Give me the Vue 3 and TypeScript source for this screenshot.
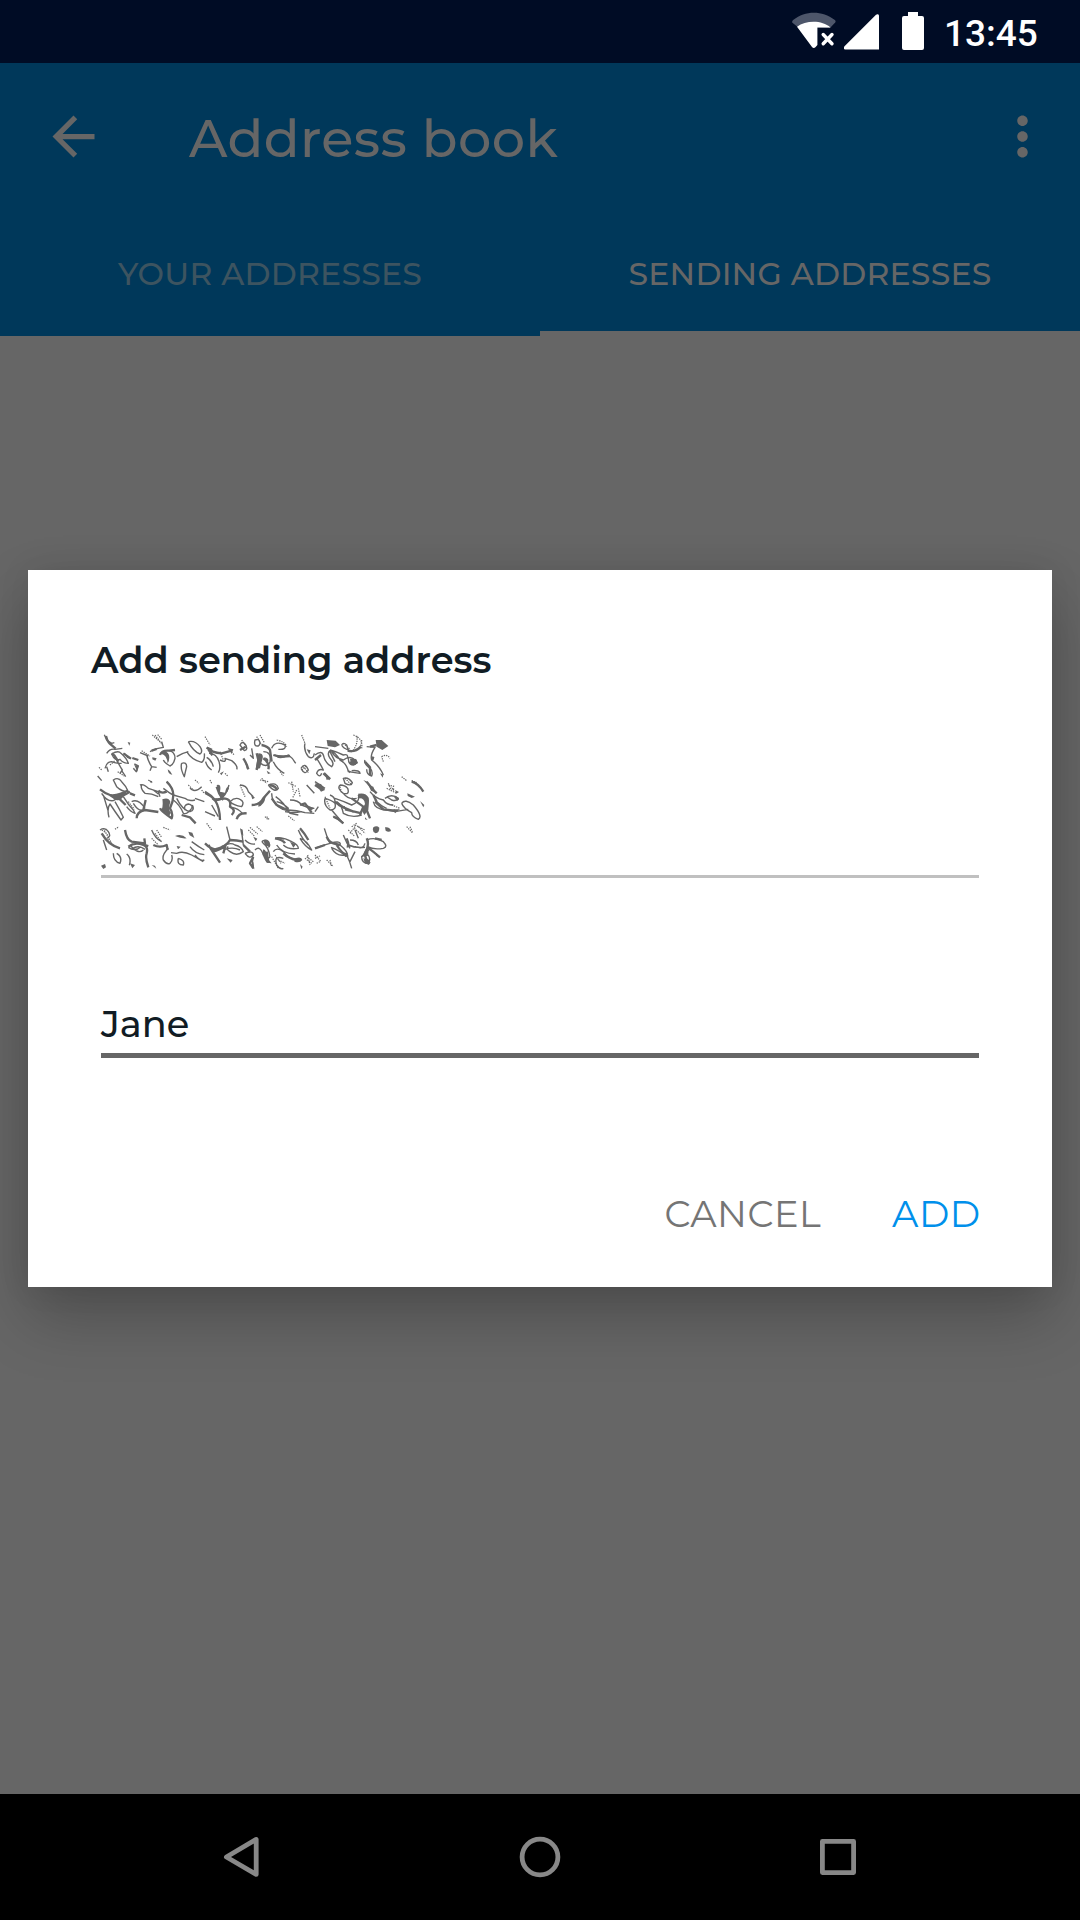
<script setup lang="ts">
import { ref } from 'vue'

interface Tab {
  id: string
  label: string
}

interface Scribble {
  offset: number
  hair: string
  dotted: string
  bold: string
  blobs: string
}

const tabs: Tab[] = [
  { id: 'own', label: 'YOUR ADDRESSES' },
  { id: 'sending', label: 'SENDING ADDRESSES' },
]
const activeTab = ref('sending')
const label = ref('Jane')

// The obscured address, drawn as three neighbouring patches of strokes.
const scribbles: Scribble[] = [
  {
    offset: 0,
    hair: `M28 14L35 30L50 40L58 38M50 72Q70 60 78 70Q95 85 100 100Q85 100 75 88Q60 95 50 72M35 70Q45 55 60 58L82 55M30 115Q35 95 50 95Q60 100 80 100M35 110L40 125M60 80Q75 110 82 120L75 130M80 122L92 140M135 68L160 78M118 102L130 108L124 125L115 115
      M165 65Q180 55 205 52L200 35M155 75Q160 95 170 110L165 122M170 110L185 112M222 62Q240 65 240 85Q235 105 225 108Q210 100 205 90M245 80Q260 70 280 65M260 100Q275 95 275 110Q270 130 268 140Q255 115 260 100M280 35Q300 30 315 50Q325 65 315 72Q295 65 280 35M275 65Q290 90 320 97Q330 90 328 70M88 70L98 82L108 86
      M55 150Q70 140 80 155Q95 170 100 185Q80 185 65 170ZM20 190Q35 215 55 212L85 195M25 195L40 245M60 215Q75 240 85 262L78 270Q60 245 45 222Q35 235 42 262M85 200Q100 225 115 240L120 250Q105 245 95 230M110 215Q130 205 150 235M115 220Q130 245 145 240M140 165Q135 175 150 190Q170 190 190 200M135 165Q145 160 160 175L190 185L195 200M205 175Q225 190 235 195L270 205Q280 215 300 210M235 210Q255 225 265 250Q275 255 290 235Q295 225 280 222Q265 225 270 240M245 205Q262 240 285 245Q300 240 292 225M285 175Q300 190 320 170M300 205L328 215M175 180L190 192M8 138L20 152
      M15 300Q30 290 40 305Q50 320 35 325M25 330L35 360M105 345Q130 375 145 360M65 370q18 10 10 30q-20 -5 -20 -30M95 372q15 12 8 34M220 355Q200 375 205 390Q215 405 225 400Q235 390 230 375M228 368L245 370Q265 362 290 375L325 395M250 385q20 5 15 20q-20 0 -15 -20M290 335Q310 350 328 360M300 375Q315 395 328 390M100 352Q120 366 138 350M112 356Q130 344 150 358M170 300Q180 325 200 335M285 350Q300 372 328 374`,
    dotted: `M172 15L198 38M180 15L203 45M188 14L200 28M140 62L165 78M45 105L60 92M68 125L88 138M12 112L20 120M160 150L172 158M215 155L230 172M20 300Q40 310 42 330M25 295L50 340M60 298L72 290M185 300L200 322M180 310L195 330M205 292L225 300M170 325L190 345M280 165L300 185M300 150L312 160M320 180L328 190M100 215L118 238`,
    bold: `M33 18Q38 38 48 44L62 56M50 70L58 76L70 95M85 70L108 86M112 84L130 90M195 75Q200 60 222 62L240 60M170 62L185 57M15 178Q30 190 45 195L60 205Q80 200 105 185M72 205L92 225M105 190L120 196M125 265Q125 245 150 240L190 246M190 182Q200 192 215 185M215 155Q235 175 235 195Q235 215 225 235Q235 250 230 265Q200 245 195 235M260 255L285 262L302 280M20 310Q40 345 75 355M90 300Q95 330 110 335L150 340L148 325M100 350Q120 335 145 345Q160 350 155 370Q150 385 160 412M175 345Q195 355 215 345L218 360M145 240L152 210M120 336L160 348`,
    blobs: `M118 105L130 108L127 125ZM200 68Q215 58 222 75Q225 90 218 100Q215 75 200 72ZM218 118q10 5 14 16q-12 0 -14 -16M172 82l13 3l-4 7l-9 -4zM98 36l8 2l-3 9zM200 240Q205 225 202 208Q220 200 226 215Q218 240 228 248L222 258ZM45 192Q70 195 98 178Q88 205 72 210Q60 215 45 192M240 318Q260 310 275 325Q260 327 240 318M280 305l12 3l6 16l-14 -8zM18 407l12 -5l3 10l-8 5zM105 400l15 5l-8 10zM170 405l10 2l4 9zM160 150l12 4l-3 6zM245 348l12 2l-8 8z`,
  },
  {
    offset: 330,
    hair: `M12 70Q35 70 42 95Q48 115 40 128M5 82Q20 90 25 110M20 120Q5 110 2 95M45 90Q65 100 60 85L80 92Q100 108 95 118M105 45Q112 30 122 45Q130 60 118 62ZM150 30Q145 50 160 48Q170 40 160 28ZM135 75L145 85L140 55M175 65Q200 65 195 95Q190 110 175 105Q155 95 160 80M210 75Q225 90 250 75Q265 85 272 100M205 95Q215 118 238 130M200 55Q210 30 240 45Q245 60 220 58M300 40Q295 60 310 80Q325 90 328 70M288 115Q300 95 310 120Q300 138 288 115
      M0 190Q20 200 35 212M65 185L72 165M75 215Q90 200 105 208Q120 215 110 230Q85 225 75 215M80 232Q100 235 112 250M105 165Q125 165 130 185L145 200M190 165Q215 155 220 175Q210 190 190 165M200 190Q200 215 220 230Q240 245 250 235Q235 220 215 215M212 200Q235 215 255 250L280 255M255 210Q280 210 290 225Q310 235 328 235M250 240Q275 240 300 248L328 250M240 245Q265 250 290 245M0 245L30 258M305 165L328 190M20 225L40 260
      M65 290Q70 310 75 330M50 350Q75 335 90 345Q110 350 115 365Q95 380 75 365Q60 355 70 350M60 358Q85 350 105 360M120 370Q145 360 145 375Q135 390 120 370M150 360Q165 345 175 375Q190 390 195 380Q190 350 175 340Q165 330 185 332Q200 345 190 352M145 380Q140 395 145 412M110 305L115 345M210 325Q235 320 260 335Q280 345 280 355Q250 360 235 345M215 345Q230 370 270 372M205 365Q215 350 235 365Q250 385 270 388M235 385Q205 375 215 405Q225 420 235 415M280 300Q290 325 310 345M285 325Q305 330 320 360Q300 350 285 325M120 330Q135 345 150 342`,
    dotted: `M0 20L15 45M70 55L88 75M110 30L125 50M155 20L170 45M165 15L178 38M215 30Q240 35 245 50M290 15L300 40M225 125L235 138M295 110L310 128M290 120L305 108M165 150L190 155M170 145L185 160M250 158L275 170M260 155L265 185M275 180L262 205M280 175L285 200M105 165L120 200M15 150L20 160M5 280L20 300M130 300L150 320M135 292L158 312M155 290L172 305M180 260L190 270M250 258L268 272M200 380L220 415M210 375L228 400M220 390L240 400M305 380L325 395M300 385L320 400M308 375L315 405M60 130L70 140M45 65L55 90M185 260L192 268`,
    bold: `M5 52Q20 68 50 70L80 62M10 58L22 76M105 60L122 50M155 70L160 90L155 120M115 85Q125 100 130 118M175 85Q195 98 190 118M170 45Q190 50 195 60L200 95M205 75Q225 82 255 78M0 185Q18 195 30 210L55 205Q80 205 75 230Q95 240 80 255M35 170Q40 190 55 210M30 210Q45 235 45 270M140 225Q165 225 175 205L195 182M195 165Q215 170 215 180M95 268Q100 248 125 250M200 205L215 225L250 242M285 225L300 220L320 248M0 340Q15 355 30 358Q65 350 75 330Q95 330 115 335M10 345L45 398M20 365Q45 360 60 348M115 345L135 365M210 325Q235 330 240 340M235 370Q250 385 275 390M185 365L190 398M145 380L135 400L145 415M285 295Q300 312 310 330M55 370L62 345`,
    blobs: `M8 50L22 56L20 72ZM70 55L85 58L80 72ZM160 70Q178 70 172 88L165 115L152 118ZM178 82Q195 85 188 98ZM118 90L128 105L126 118ZM35 165Q50 160 45 185L60 188Q65 165 72 175Q65 195 48 210ZM20 208Q35 200 50 210L30 215ZM160 220Q175 205 182 200Q178 225 160 230ZM138 195l12 8l-8 5zM305 58l12 3l-4 12zM305 225L328 235L315 243ZM175 330Q190 325 195 340Q192 355 180 345ZM175 358Q185 360 187 385L200 400L185 398Q168 375 175 358M270 385Q290 378 292 390Q285 400 268 395ZM145 395L148 418L138 410ZM145 320l12 6l-5 8zM210 322Q230 318 238 330ZM255 335l18 8l-8 10zM65 385l18 5l-6 8zM285 402l8 8l-4 8zM105 295l8 4l2 18l-7 -5zM185 122l12 8l-8 2zM45 130l12 -6l-8 12z`,
  },
  {
    offset: 660,
    hair: `M0 50L40 55M0 75Q20 60 25 75Q30 100 50 110Q60 100 45 85Q35 70 45 62Q60 65 75 90Q95 100 100 125L135 130Q135 120 110 122M5 85Q15 100 25 120Q10 115 5 130Q15 145 20 130M45 60Q65 65 85 75Q100 70 98 85M50 65Q60 85 85 90Q105 75 120 90Q130 100 115 105Q100 105 100 85M80 45Q85 35 95 45L100 60Q85 55 80 45M155 50L180 52Q165 75 170 90Q195 110 205 135M150 90Q145 100 165 115Q175 125 170 138Q155 135 155 118M60 95L45 65
      M0 155L30 175M85 145Q100 140 112 158Q108 170 90 160ZM75 165Q65 175 85 190Q105 195 98 175Q90 165 75 165M45 195Q60 200 60 215Q75 235 90 230M30 205Q25 225 45 240Q65 240 60 220Q50 210 30 205M60 205Q90 215 110 225Q135 215 130 200M65 215Q80 225 85 250Q110 265 140 255M85 190Q100 210 125 205M165 185Q180 205 205 210Q215 225 235 225M175 215Q180 240 215 240L240 245M180 210Q200 230 215 235M210 205Q230 190 250 205Q245 215 230 210L215 200M240 245L280 238M260 220Q270 205 295 225Q325 260 310 268Q290 260 290 248Q265 235 260 220M10 230L0 245M50 240Q75 270 85 280
      M28 295Q35 320 45 340M0 355Q25 345 45 340Q80 330 75 345Q100 365 98 380Q70 360 48 352M50 355Q65 380 90 375M85 315Q95 340 105 355M105 330Q125 330 130 345M100 345Q120 355 150 352M155 330Q180 320 205 335Q220 350 205 355Q175 360 158 350M165 355Q155 370 140 380Q140 400 160 400Q170 385 155 370M120 350Q145 360 150 340M95 375Q105 395 110 415M120 365L105 395M130 325L120 300`,
    dotted: `M115 15Q145 25 140 55M125 18Q130 40 115 60M140 30Q140 60 105 65M85 40L105 58M200 80Q215 70 225 85M205 95L200 80M90 145L110 165M220 165L240 170M215 175L245 190M220 160L230 185M75 170L80 190M30 200L45 235M110 290L125 280M100 300L120 320M120 285L150 300M118 295L140 315M130 290L150 310M105 310L120 290M275 290L292 308M285 290L292 305M0 375L18 395M0 385L15 378M35 390L55 410M45 390L50 410M5 400L15 395M230 225L255 235M260 140L275 152M290 152L305 158`,
    bold: `M0 90L18 75M25 130L45 148M98 62Q120 68 138 50M105 95Q110 105 125 98L120 88M165 50L185 45M150 95L165 112L165 135M172 90L175 80M155 155L175 180L185 190M130 195Q150 190 158 205L155 240L165 265M110 205L145 230L135 255M60 215L85 232L115 245M55 260Q70 265 85 280M90 238L140 250M175 195L185 215M180 215L205 238L240 242M290 155Q310 160 325 185M240 200L250 210M35 320Q40 335 55 340L75 345M65 345Q80 370 98 378M95 325Q105 350 95 350M155 325Q165 345 150 370Q150 390 165 400M155 350Q175 365 195 382M180 325L200 330M0 355L30 345M0 165L15 175`,
    blobs: `M35 30L62 32L75 45L60 52L38 48ZM182 30L200 30L220 48L202 60L185 50ZM105 87Q120 82 128 98Q120 108 108 102ZM0 160L18 162L30 180L18 185ZM28 125L48 145L35 150ZM128 195Q150 190 162 210L160 240L148 255L140 240L150 222Q148 202 130 205ZM160 165L175 170L182 188L168 182ZM145 150l12 5l-3 5zM277 190L300 200L290 204L278 198ZM315 213L328 225L325 232ZM235 238L255 238L240 250ZM52 258L70 262L72 272ZM175 292Q185 285 193 293Q193 308 182 310Q170 305 175 292M210 292Q225 290 228 303Q220 308 212 302ZM152 358Q165 360 158 378L140 380ZM145 385L165 390L162 405L150 400ZM75 365L98 370L92 382ZM228 172l10 4l-2 8zM240 180l12 6l-8 5zM182 368l14 14l-12 -4zM98 120l10 4l-5 6zM195 130l10 4l-2 9zM150 262l8 8l-8 -2z`,
  },
]
</script>

<template>
  <div class="screen">
    <header class="status-bar">
      <svg class="wifi" viewBox="0 0 46 38" aria-hidden="true">
        <path d="M1.2 10.5C1 9.2 1.5 8.6 2.5 7.8C14 -1.6 31.5 -1.6 43.5 7.8C44.6 8.6 45 9.5 44.2 10.5L39 16L6 14.5Z" fill="#4d566a" />
        <path d="M6 14.8C15 8.2 31 8 39.5 15.5H26.4V33L24.4 35.2C23.3 36.3 22 36.1 21 35Z" fill="#fff" />
        <path d="M32.2 22.5L41 31.7M41 22.5L32.2 31.7" stroke="#fff" stroke-width="3.4" stroke-linecap="round" />
      </svg>
      <svg class="signal" viewBox="0 0 35 36" aria-hidden="true">
        <path d="M32 .8C33.5-.4 35 .2 35 2V35.5H1C-.2 35.5-.5 33.5.5 32.3Z" fill="#fff" />
      </svg>
      <svg class="battery" viewBox="0 0 22 38" aria-hidden="true">
        <path d="M6 0H16V4H20Q22 4 22 6V36Q22 38 20 38H2Q0 38 0 36V6Q0 4 2 4H6Z" fill="#fff" />
      </svg>
      <time class="clock">13:45</time>
    </header>

    <div class="app-bar">
      <div class="toolbar">
        <svg class="back" viewBox="0 0 24 24" aria-label="Back">
          <path d="M20 11H7.83l5.59-5.59L12 4l-8 8 8 8 1.41-1.41L7.83 13H20v-2z" fill="#666" />
        </svg>
        <h1 class="title">Address book</h1>
        <svg class="more" viewBox="0 0 24 24" aria-label="More options">
          <path d="M12 8c1.1 0 2-.9 2-2s-.9-2-2-2-2 .9-2 2 .9 2 2 2zm0 2c-1.1 0-2 .9-2 2s.9 2 2 2 2-.9 2-2-.9-2-2-2zm0 6c-1.1 0-2 .9-2 2s.9 2 2 2 2-.9 2-2-.9-2-2-2z" fill="#666" />
        </svg>
      </div>
      <nav class="tabs">
        <button
          v-for="tab in tabs"
          :key="tab.id"
          type="button"
          :class="['tab', tab.id, { active: tab.id === activeTab }]"
          @click="activeTab = tab.id"
        >
          <span>{{ tab.label }}</span>
        </button>
      </nav>
    </div>

    <main class="content">
      <section class="dialog" role="dialog">
        <h2 class="dialog-title">Add sending address</h2>
        <div class="address-field">
          <svg class="scribble" viewBox="0 0 1005 435" aria-hidden="true">
            <g v-for="s in scribbles" :key="s.offset" :transform="`translate(${s.offset} 0)`">
              <path :d="s.hair" class="hair" />
              <path :d="s.dotted" class="dotted" />
              <path :d="s.bold" class="bold" />
              <path :d="s.blobs" class="blob" />
            </g>
          </svg>
        </div>
        <div class="label-field"><span>{{ label }}</span></div>
        <div class="actions">
          <button type="button" class="cancel">CANCEL</button>
          <button type="button" class="add">ADD</button>
        </div>
      </section>
    </main>

    <footer class="nav-bar">
      <svg viewBox="0 0 48 48" aria-label="Back">
        <path d="M38.2 6.4V41.4L8.4 24Z" class="nav-shape" />
      </svg>
      <svg viewBox="0 0 48 48" aria-label="Home">
        <circle cx="24" cy="24" r="17.9" class="nav-shape" />
      </svg>
      <svg viewBox="0 0 48 48" aria-label="Recents">
        <rect x="8.4" y="8.4" width="31.2" height="31.2" class="nav-shape" />
      </svg>
    </footer>
  </div>
</template>

<style>
body {
  margin: 0;
  background: #666;
}
</style>

<style scoped>
.screen {
  width: 1080px;
  height: 1920px;
  display: flex;
  flex-direction: column;
  overflow: hidden;
  background: #666;
  font-family: Montserrat, Inter, "Liberation Sans", sans-serif;
}
svg {
  display: block;
  flex: none;
}
h1,
h2 {
  margin: 0;
}
button {
  border: 0;
  padding: 0;
  background: none;
  font-family: inherit;
}

.status-bar {
  height: 63px;
  flex: none;
  display: flex;
  justify-content: flex-end;
  align-items: flex-start;
  background: #000c25;
  box-sizing: border-box;
  padding: 12px 42px 0 0;
}
.wifi {
  width: 46px;
  height: 38px;
  margin-right: 7px;
}
.signal {
  width: 35px;
  height: 36px;
  margin: 2px 23px 0 0;
}
.battery {
  width: 22px;
  height: 38px;
}
.clock {
  width: 94px;
  margin-left: 20px;
  padding-top: 1px;
  font: 500 37px/42px Roboto, sans-serif;
  color: #fff;
  white-space: nowrap;
}

.app-bar {
  height: 273px;
  flex: none;
  display: flex;
  flex-direction: column;
  background: #00385a;
}
.toolbar {
  height: 147px;
  display: flex;
  align-items: center;
  padding: 0 26px 0 42px;
}
.back,
.more {
  width: 63px;
  height: 63px;
}
.title {
  flex: 1;
  margin-left: 84px;
  padding-top: 3px;
  font-size: 52.5px;
  font-weight: 500;
  line-height: 60px;
  letter-spacing: 0.4px;
  color: #666;
}
.tabs {
  flex: 1;
  display: flex;
}
.tab {
  flex: 1;
  display: flex;
  justify-content: center;
  padding-top: 44px;
  font-size: 31.5px;
  line-height: 40px;
  letter-spacing: 0.22px;
  font-weight: 500;
  white-space: nowrap;
  color: #3d5460;
  border-bottom: 5px solid transparent;
}
.tab.active {
  color: #666;
  border-bottom-color: #666;
}

.content {
  flex: 1;
  padding: 234px 28px 0;
}
.dialog {
  height: 717px;
  box-sizing: border-box;
  padding: 55px 73px 0;
  display: flex;
  flex-direction: column;
  background: #fff;
  box-shadow: 0 30px 60px rgba(0, 0, 0, 0.24), 0 0 30px rgba(0, 0, 0, 0.08);
}
.dialog-title {
  margin-left: -10px;
  font-size: 36.75px;
  font-weight: 600;
  line-height: 70px;
  color: #111c24;
}
.address-field {
  height: 183px;
  flex: none;
  box-sizing: border-box;
  padding-top: 35px;
  border-bottom: 3px solid #c0c0c0;
}
.scribble {
  width: 335px;
  height: 145px;
  margin-left: -6px;
}
.hair,
.dotted,
.bold {
  fill: none;
  stroke: #666;
  stroke-linejoin: round;
}
.hair {
  stroke-width: 4.2;
}
.dotted {
  stroke-width: 3.6;
  stroke-dasharray: 4 3;
}
.bold {
  stroke-width: 7;
}
.blob {
  fill: #666;
}
.label-field {
  height: 180px;
  flex: none;
  box-sizing: border-box;
  display: flex;
  align-items: flex-end;
  padding-bottom: 6px;
  border-bottom: 5px solid #666;
  color: #111c24;
  font-size: 36.75px;
  line-height: 46px;
  font-weight: 500;
}
.actions {
  display: flex;
  justify-content: flex-end;
  gap: 71px;
  margin-right: -1.5px;
  padding-top: 133px;
}
.actions button {
  font-size: 36.75px;
  line-height: 46px;
  letter-spacing: 0.45px;
  white-space: nowrap;
}
.actions .cancel {
  color: #757575;
}
.actions .add {
  color: #0090eb;
}

.nav-bar {
  height: 126px;
  flex: none;
  box-sizing: border-box;
  display: flex;
  justify-content: space-between;
  align-items: center;
  padding: 0 218px;
  background: #000;
}
.nav-bar svg {
  width: 48px;
  height: 48px;
}
.nav-shape {
  fill: none;
  stroke: #888;
  stroke-width: 4.8;
  stroke-linejoin: round;
}
</style>
